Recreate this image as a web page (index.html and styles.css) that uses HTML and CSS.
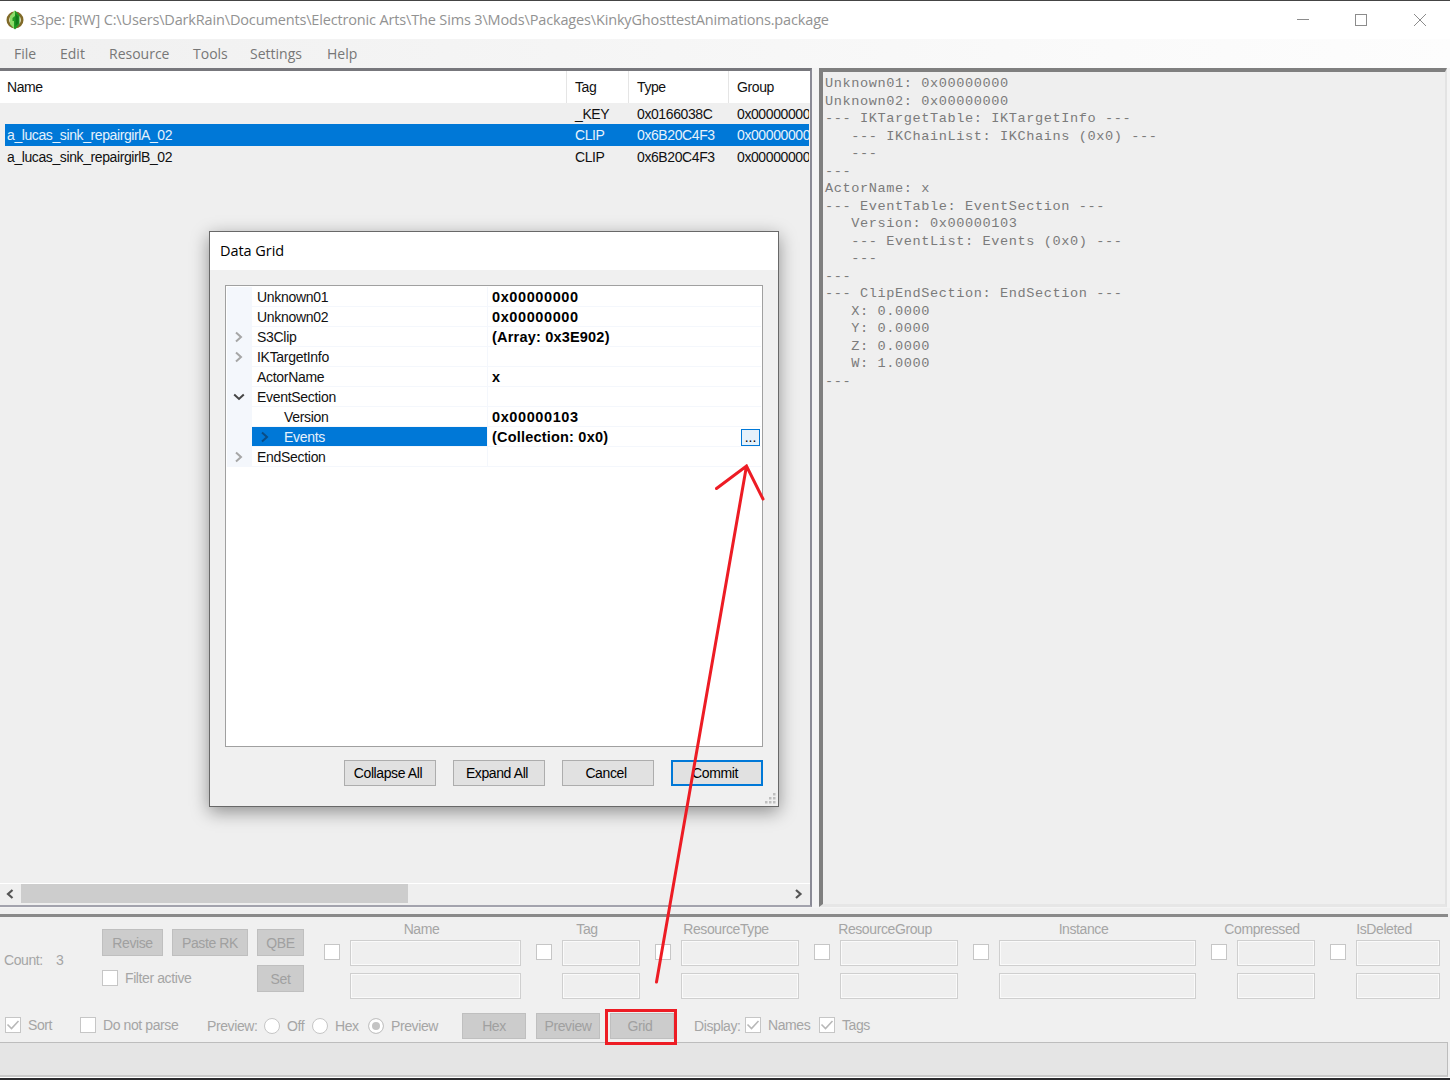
FILE: index.html
```html
<!DOCTYPE html>
<html lang="en">
<head>
  <meta charset="UTF-8">
  <meta name="viewport" content="width=device-width, initial-scale=1.0">
  <title>s3pe</title>
  <link rel="stylesheet" href="styles.css">
</head>
<body>
  <div class="window">
    <div class="titlebar">
      <svg class="app-icon" width="18" height="20" viewBox="0 0 18 20">
        <ellipse cx="9" cy="10" rx="7.2" ry="7.2" fill="#e9efcf" stroke="#806a28" stroke-width="2.6"/>
        <path d="M9 0.5L13.5 5.5V14L9 19.5L4 14V6Z" fill="#1f9a24"/>
        <path d="M9 0.5L4 6V14L8 18.5V11H6.5V8L9 6Z" fill="#8fdc6a"/>
        <path d="M9.5 4V16L12.5 13V7Z" fill="#147a1b"/>
      </svg>
      <span class="title">s3pe: [RW] C:\Users\DarkRain\Documents\Electronic Arts\The Sims 3\Mods\Packages\KinkyGhosttestAnimations.package</span>
      <svg class="controls" width="132" height="14" viewBox="0 0 132 14" fill="none" stroke="#8c8c8c">
        <path d="M0 6.5H12"/>
        <rect x="58.5" y="1.5" width="11" height="11"/>
        <path d="M117 1L129 13M129 1L117 13"/>
      </svg>
    </div>

    <div class="menu">
      <span class="m-file">File</span>
      <span class="m-edit">Edit</span>
      <span class="m-resource">Resource</span>
      <span class="m-tools">Tools</span>
      <span class="m-settings">Settings</span>
      <span class="m-help">Help</span>
    </div>

    <div class="panes">
      <div class="list">
        <div class="list-head">
          <span>Name</span><span>Tag</span><span>Type</span><span>Group</span>
        </div>
        <div class="list-row">
          <span></span><span>_KEY</span><span>0x0166038C</span><span>0x00000000</span>
        </div>
        <div class="list-row selected">
          <span>a_lucas_sink_repairgirlA_02</span><span>CLIP</span><span>0x6B20C4F3</span><span>0x00000000</span>
        </div>
        <div class="list-row">
          <span>a_lucas_sink_repairgirlB_02</span><span>CLIP</span><span>0x6B20C4F3</span><span>0x00000000</span>
        </div>
        <div class="scrollbar">
          <svg width="21" height="20" viewBox="0 0 21 20" fill="none" stroke="#555" stroke-width="2.2"><path d="M12.5 6L8 10L12.5 14"/></svg>
          <div class="thumb"></div>
          <svg width="21" height="20" viewBox="0 0 21 20" fill="none" stroke="#555" stroke-width="2.2"><path d="M8 6L12.5 10L8 14"/></svg>
        </div>
      </div>
      <pre class="preview">Unknown01: 0x00000000
Unknown02: 0x00000000
--- IKTargetTable: IKTargetInfo ---
   --- IKChainList: IKChains (0x0) ---
   ---
---
ActorName: x
--- EventTable: EventSection ---
   Version: 0x00000103
   --- EventList: Events (0x0) ---
   ---
---
--- ClipEndSection: EndSection ---
   X: 0.0000
   Y: 0.0000
   Z: 0.0000
   W: 1.0000
---</pre>
    </div>

    <div class="bottom">
      <div class="filter">
        <div class="count"><span>Count:</span><span>3</span></div>
        <div class="filter-actions">
          <button class="off">Revise</button>
          <button class="off">Paste RK</button>
          <button class="off">QBE</button>
          <div class="check filter-active"><i class="box"></i><span>Filter active</span></div>
          <button class="off">Set</button>
        </div>
        <div class="fields">
          <div class="field f-name"><label>Name</label><i class="box"></i><input disabled><input disabled></div>
          <div class="field f-tag"><label>Tag</label><i class="box"></i><input disabled><input disabled></div>
          <div class="field f-type"><label>ResourceType</label><i class="box"></i><input disabled><input disabled></div>
          <div class="field f-type"><label>ResourceGroup</label><i class="box"></i><input disabled><input disabled></div>
          <div class="field f-instance"><label>Instance</label><i class="box"></i><input disabled><input disabled></div>
          <div class="field f-tag"><label>Compressed</label><i class="box"></i><input disabled><input disabled></div>
          <div class="field f-deleted"><label>IsDeleted</label><i class="box"></i><input disabled><input disabled></div>
        </div>
      </div>

      <div class="options">
        <div class="check o-sort"><i class="box"><svg width="14" height="14" viewBox="0 0 14 14"><path d="M1.5 6.5L5.5 10.5L12.5 3"/></svg></i><span>Sort</span></div>
        <div class="check o-parse"><i class="box"></i><span>Do not parse</span></div>
        <span class="o-label">Preview:</span>
        <div class="check o-off"><i class="radio"></i><span>Off</span></div>
        <div class="check o-hex"><i class="radio"></i><span>Hex</span></div>
        <div class="check o-preview"><i class="radio on"></i><span>Preview</span></div>
        <div class="view-buttons">
          <button class="off">Hex</button>
          <button class="off">Preview</button>
          <button class="off grid-button">Grid</button>
        </div>
        <span class="o-display">Display:</span>
        <div class="check o-names"><i class="box"><svg width="14" height="14" viewBox="0 0 14 14"><path d="M1.5 6.5L5.5 10.5L12.5 3"/></svg></i><span>Names</span></div>
        <div class="check"><i class="box"><svg width="14" height="14" viewBox="0 0 14 14"><path d="M1.5 6.5L5.5 10.5L12.5 3"/></svg></i><span>Tags</span></div>
      </div>
    </div>
    <div class="status"></div>
    <div class="taskbar"></div>
  </div>

  <div class="dialog">
    <div class="dialog-title">Data Grid</div>
    <div class="props">
      <div class="prop"><i></i><span>Unknown01</span><b class="num">0x00000000</b></div>
      <div class="prop"><i></i><span>Unknown02</span><b class="num">0x00000000</b></div>
      <div class="prop"><i><svg width="10" height="12" viewBox="0 0 10 12"><path d="M2 1.5L7 6L2 10.5"/></svg></i><span>S3Clip</span><b>(Array: 0x3E902)</b></div>
      <div class="prop"><i><svg width="10" height="12" viewBox="0 0 10 12"><path d="M2 1.5L7 6L2 10.5"/></svg></i><span>IKTargetInfo</span><b></b></div>
      <div class="prop"><i></i><span>ActorName</span><b>x</b></div>
      <div class="prop"><i><svg class="open" width="12" height="10" viewBox="0 0 12 10"><path d="M1.2 2.5L6 7L10.8 2.5"/></svg></i><span>EventSection</span><b></b></div>
      <div class="prop child"><i></i><span>Version</span><b class="num">0x00000103</b></div>
      <div class="prop child active"><i></i><span><svg width="10" height="12" viewBox="0 0 10 12"><path d="M2 1.5L7 6L2 10.5"/></svg>Events</span><b>(Collection: 0x0)<button class="more">...</button></b></div>
      <div class="prop"><i><svg width="10" height="12" viewBox="0 0 10 12"><path d="M2 1.5L7 6L2 10.5"/></svg></i><span>EndSection</span><b></b></div>
    </div>
    <div class="dialog-buttons">
      <button>Collapse All</button>
      <button>Expand All</button>
      <button>Cancel</button>
      <button class="default">Commit</button>
    </div>
    <svg class="grip" width="11" height="11" viewBox="0 0 11 11" fill="#bfbfbf">
      <path d="M8 0h2.5v2.5H8zM4 4h2.5v2.5H4zM8 4h2.5v2.5H8zM0 8h2.5v2.5H0zM4 8h2.5v2.5H4zM8 8h2.5v2.5H8z"/>
    </svg>
  </div>

  <!-- red box round Grid and arrow to the "..." button -->
  <svg class="arrow" width="1450" height="1080" viewBox="0 0 1450 1080">
    <path d="M656.5 982L746.5 466M716.5 488.5L746.5 466L763 499"/>
    <rect x="606.5" y="1010.5" width="69" height="33"/>
  </svg>
</body>
</html>
```

FILE: styles.css
```css
* {
  box-sizing: border-box;
}
body {
  margin: 0;
  width: 1450px;
  height: 1080px;
  overflow: hidden;
  position: relative;
  background: #f0f0f0;
  font-family: "Liberation Sans", Arial, sans-serif;
  font-size: 14px;
  letter-spacing: -0.4px;
  color: #111;
}
button {
  font: inherit;
  letter-spacing: inherit;
  padding: 0;
  border-radius: 0;
}
i {
  font-style: normal;
}
.window {
  display: flex;
  flex-direction: column;
  height: 1080px;
}

/* title and menu */
.titlebar {
  display: flex;
  align-items: center;
  height: 39px;
  padding-left: 6px;
  background: #fff;
  border-top: 1px solid #444;
  font-family: "Open Sans", "Noto Sans", sans-serif;
  font-size: 14.5px;
  letter-spacing: -0.155px;
  color: #929292;
  white-space: nowrap;
}
.title {
  margin-left: 6px;
  margin-top: -1px;
  flex: 1;
}
.controls {
  margin-right: 21px;
}
.menu {
  display: flex;
  align-items: center;
  height: 29px;
  padding-left: 14px;
  background: linear-gradient(to right, #f0f0f0, #fdfdfd);
  font-family: "Open Sans", "Noto Sans", sans-serif;
  font-size: 14px;
  letter-spacing: 0;
  color: #777;
}
.m-file { width: 46px; }
.m-edit { width: 49px; }
.m-resource { width: 84px; }
.m-tools { width: 57px; }
.m-settings { width: 77px; }

/* resource list and preview */
.panes {
  display: flex;
  gap: 7px;
  height: 840px;
  background: #f4f4f4;
}
.list {
  display: flex;
  flex-direction: column;
  width: 812px;
  height: 839px;
  background: #efefef;
  border-top: 3px solid #77777c;
  border-right: 2px solid #8b8b96;
  border-bottom: 2px solid #a3a3ad;
  overflow: hidden;
}
.list-head,
.list-row {
  display: grid;
  grid-template-columns: 567px 62px 100px 1fr;
  align-items: center;
  white-space: nowrap;
}
.list-head {
  height: 32px;
  background: #fff;
}
.list-head span {
  padding-left: 8px;
  line-height: 33px;
  height: 32px;
  border-right: 1px solid #e5e5e5;
}
.list-head span:first-child {
  padding-left: 7px;
}
.list-head span:last-child {
  border-right: none;
}
.list-row {
  height: 21.3px;
  margin-right: 1px;
}
.list-row span {
  padding-left: 8px;
  line-height: 22px;
  height: 21px;
  overflow: hidden;
}
.list-row span:first-child {
  padding-left: 7px;
}
.list-row.selected {
  background: #0078d7;
  color: #e6f2fc;
  margin-left: 5px;
  grid-template-columns: 562px 62px 100px 1fr;
}
.list-row.selected span:first-child {
  padding-left: 2px;
}
.scrollbar {
  display: flex;
  margin-top: auto;
  height: 22px;
  border-top: 1px solid #fff;
}
.thumb {
  width: 387px;
  height: 19px;
  margin-right: 380px;
  background: #cdcdcd;
}
.preview {
  margin: 0;
  width: 628px;
  height: 839px;
  padding: 3px 0 0 2px;
  border-top: 4px solid #7f7f7f;
  border-left: 4px solid #7f7f7f;
  border-right: 2px solid #e3e3e3;
  border-bottom: 3px solid #e6e6e6;
  background: #efefef;
  font-family: "Liberation Mono", "Courier New", monospace;
  font-size: 13.6px;
  letter-spacing: 0.59px;
  line-height: 17.5px;
  color: #7b7b7b;
}

/* filter area */
.bottom {
  height: 134px;
  padding-top: 6px;
  color: #a5a5a5;
}
.filter {
  display: flex;
  width: 1448px;
  height: 94px;
  border-top: 3px solid #8a8a8a;
}
.count {
  display: flex;
  width: 102px;
  padding: 35px 0 0 4px;
}
.count span:first-child {
  width: 52px;
}
.filter-actions {
  display: grid;
  grid-template-columns: 61px 76px 47px;
  grid-template-rows: 27px 27px;
  column-gap: 9px;
  row-gap: 9px;
  width: 222px;
  padding-top: 12px;
}
.filter-active {
  grid-column: 1 / 3;
  margin-top: -2px;
}
button.off {
  background: #cccccc;
  border: 1px solid #bfbfbf;
  color: #a0a0a0;
}
.fields {
  display: flex;
  gap: 15px;
}
.field {
  display: grid;
  grid-template-columns: 16px 1fr;
  grid-template-rows: 23px 32.5px 26px;
  column-gap: 10px;
}
.field label {
  grid-column: 1 / 3;
  text-align: center;
  line-height: 23px;
  height: 23px;
  margin-left: -2px;
  margin-top: 1px;
  white-space: nowrap;
}
.field .box {
  margin-top: 4px;
}
.field input {
  grid-column: 2;
  width: 100%;
  height: 26px;
  border: 1px solid #cfcfcf;
  background: #efefef;
  box-shadow: inset 0 0 0 1px #fafafa;
}
.f-name { width: 197px; }
.f-tag { width: 104px; }
.f-type { width: 144px; }
.f-instance { width: 223px; }
.f-deleted { width: 110px; }

.check {
  display: flex;
  align-items: center;
  gap: 7px;
  white-space: nowrap;
}
.box,
.radio {
  display: block;
  flex: none;
  width: 16px;
  height: 16px;
  background: #fff;
  border: 1px solid #c6c6c6;
}
.box svg {
  display: block;
  fill: none;
  stroke: #b8b8b8;
  stroke-width: 1.6;
}
.radio {
  border-radius: 50%;
}
.radio.on {
  background: #c4c4c4;
  box-shadow: inset 0 0 0 3px #fff;
}
.options {
  display: flex;
  align-items: center;
  height: 34px;
  padding: 1px 0 0 5px;
  white-space: nowrap;
}
.o-sort { width: 75px; }
.o-parse { width: 127px; }
.o-sort,
.o-parse,
.o-names,
.o-names + .check {
  margin-top: -2px;
}
.o-label { width: 57px; }
.o-off { width: 48px; }
.o-hex { width: 56px; }
.o-preview { width: 94px; }
.view-buttons {
  display: flex;
  gap: 10px;
  width: 232px;
}
.view-buttons button {
  width: 64px;
  height: 26px;
}
.view-buttons .grid-button {
  padding-right: 4px;
}
.o-display { width: 51px; }
.o-names { width: 74px; }
.status {
  width: 1448px;
  height: 35px;
  background: #e5e5e5;
  border: 1px solid #bdbdbd;
  border-left: none;
  border-bottom: 2px solid #cacaca;
}
.taskbar {
  height: 3px;
  background: #2b2b2e;
  border-top: 1px solid #fff;
}

/* data grid dialog */
.dialog {
  position: absolute;
  left: 209px;
  top: 231px;
  width: 570px;
  height: 576px;
  background: #f0f0f0;
  border: 1px solid #686868;
  box-shadow: 0 5px 17px rgba(0, 0, 0, 0.4);
}
.dialog-title {
  height: 38px;
  padding-left: 10px;
  line-height: 38px;
  background: #fff;
  font-family: "Open Sans", "Noto Sans", sans-serif;
  font-size: 14.5px;
  letter-spacing: -0.05px;
  color: #000;
}
.props {
  width: 538px;
  height: 462px;
  margin: 15px 0 0 15px;
  padding: 1px;
  background: #fff;
  border: 1px solid #a0a0a0;
}
.prop {
  display: grid;
  grid-template-columns: 25px 235px 1fr;
  height: 20px;
  line-height: 20px;
}
.prop i {
  display: flex;
  align-items: center;
  justify-content: center;
  padding-right: 2px;
  background: #f4f7fc;
}
.prop span,
.prop b {
  height: 20px;
  border-bottom: 1px solid #f4f7fc;
}
.prop span {
  display: flex;
  align-items: center;
  padding: 1px 0 0 5px;
  letter-spacing: -0.3px;
}
.prop b {
  display: flex;
  justify-content: space-between;
  align-items: center;
  padding: 1px 1px 0 4px;
  border-left: 1px solid #f4f7fc;
  font-size: 14.5px;
  letter-spacing: 0.2px;
  color: #000;
}
.prop .num {
  letter-spacing: 0.6px;
}
.prop svg {
  fill: none;
  stroke: #a6a6a6;
  stroke-width: 2;
}
.prop svg.open {
  stroke: #444;
}
.prop.child span {
  padding-left: 32px;
}
.prop.active span {
  padding-left: 8px;
  background: #0078d7;
  background-clip: padding-box;
  color: #e6f2fc;
}
.prop.active svg {
  margin-right: 14px;
  stroke: #0a4d86;
}
.more {
  width: 19px;
  height: 17px;
  line-height: 15px;
  background: #e5f1fb;
  border: 1px solid #0078d7;
  font-size: 14px;
  font-weight: normal;
  letter-spacing: 0;
}
.dialog-buttons {
  display: flex;
  gap: 17px;
  margin: 13px 0 0 133.5px;
}
.dialog-buttons button {
  width: 92px;
  height: 26px;
  padding-right: 3px;
  background: #e1e1e1;
  border: 1px solid #adadad;
}
.dialog-buttons .default {
  border: 2px solid #0078d7;
}
.grip {
  position: absolute;
  right: 2px;
  bottom: 2px;
}
.arrow {
  position: absolute;
  left: 0;
  top: 0;
  fill: none;
  stroke: #ed1c24;
  stroke-width: 3;
  pointer-events: none;
}
.arrow path {
  stroke-linecap: round;
}
```
